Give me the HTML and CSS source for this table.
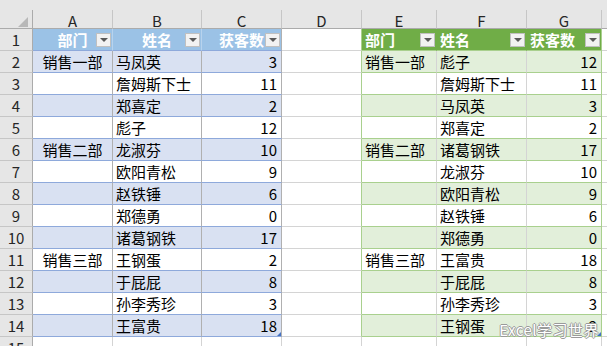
FILE: index.html
```html
<!DOCTYPE html>
<html lang="zh">
<head>
<meta charset="utf-8">
<link rel="stylesheet" href="styles.css">
</head>
<body>
<div class="sheet">
  <div class="strip"></div>
  <div class="row colhdr">
    <div class="hc corner"><svg width="10" height="10" viewBox="0 0 10 10"><polygon points="10,0 10,10 0,10" fill="#b8b8b8"/></svg></div>
    <div class="hc">A</div><div class="hc">B</div><div class="hc">C</div><div class="hc">D</div>
    <div class="hc">E</div><div class="hc">F</div><div class="hc">G</div><div class="hc last"></div>
  </div>

  <div class="row">
    <div class="rh">1</div>
    <div class="cell h1 ctr">部门<span class="dd"></span></div>
    <div class="cell h1 ctr">姓名<span class="dd"></span></div>
    <div class="cell h1 ctr t1r">获客数<span class="dd"></span></div>
    <div class="cell d"></div>
    <div class="cell h2">部门<span class="dd"></span></div>
    <div class="cell h2">姓名<span class="dd"></span></div>
    <div class="cell h2 t2r">获客数<span class="dd"></span></div>
    <div class="cell"></div>
  </div>

  <div class="row">
    <div class="rh">2</div>
    <div class="cell t1 b1 ctr">销售一部</div><div class="cell t1 b1">马凤英</div><div class="cell t1 b1 num t1r">3</div>
    <div class="cell d"></div>
    <div class="cell t2 b2">销售一部</div><div class="cell t2 b2">彪子</div><div class="cell t2 b2 num t2r">12</div>
    <div class="cell"></div>
  </div>
  <div class="row">
    <div class="rh">3</div>
    <div class="cell t1 ctr"></div><div class="cell t1">詹姆斯下士</div><div class="cell t1 num t1r">11</div>
    <div class="cell d"></div>
    <div class="cell t2"></div><div class="cell t2">詹姆斯下士</div><div class="cell t2 num t2r">11</div>
    <div class="cell"></div>
  </div>
  <div class="row">
    <div class="rh">4</div>
    <div class="cell t1 b1 ctr"></div><div class="cell t1 b1">郑喜定</div><div class="cell t1 b1 num t1r">2</div>
    <div class="cell d"></div>
    <div class="cell t2 b2"></div><div class="cell t2 b2">马凤英</div><div class="cell t2 b2 num t2r">3</div>
    <div class="cell"></div>
  </div>
  <div class="row">
    <div class="rh">5</div>
    <div class="cell t1 ctr"></div><div class="cell t1">彪子</div><div class="cell t1 num t1r">12</div>
    <div class="cell d"></div>
    <div class="cell t2"></div><div class="cell t2">郑喜定</div><div class="cell t2 num t2r">2</div>
    <div class="cell"></div>
  </div>
  <div class="row">
    <div class="rh">6</div>
    <div class="cell t1 b1 ctr">销售二部</div><div class="cell t1 b1">龙淑芬</div><div class="cell t1 b1 num t1r">10</div>
    <div class="cell d"></div>
    <div class="cell t2 b2">销售二部</div><div class="cell t2 b2">诸葛钢铁</div><div class="cell t2 b2 num t2r">17</div>
    <div class="cell"></div>
  </div>
  <div class="row">
    <div class="rh">7</div>
    <div class="cell t1 ctr"></div><div class="cell t1">欧阳青松</div><div class="cell t1 num t1r">9</div>
    <div class="cell d"></div>
    <div class="cell t2"></div><div class="cell t2">龙淑芬</div><div class="cell t2 num t2r">10</div>
    <div class="cell"></div>
  </div>
  <div class="row">
    <div class="rh">8</div>
    <div class="cell t1 b1 ctr"></div><div class="cell t1 b1">赵铁锤</div><div class="cell t1 b1 num t1r">6</div>
    <div class="cell d"></div>
    <div class="cell t2 b2"></div><div class="cell t2 b2">欧阳青松</div><div class="cell t2 b2 num t2r">9</div>
    <div class="cell"></div>
  </div>
  <div class="row">
    <div class="rh">9</div>
    <div class="cell t1 ctr"></div><div class="cell t1">郑德勇</div><div class="cell t1 num t1r">0</div>
    <div class="cell d"></div>
    <div class="cell t2"></div><div class="cell t2">赵铁锤</div><div class="cell t2 num t2r">6</div>
    <div class="cell"></div>
  </div>
  <div class="row">
    <div class="rh">10</div>
    <div class="cell t1 b1 ctr"></div><div class="cell t1 b1">诸葛钢铁</div><div class="cell t1 b1 num t1r">17</div>
    <div class="cell d"></div>
    <div class="cell t2 b2"></div><div class="cell t2 b2">郑德勇</div><div class="cell t2 b2 num t2r">0</div>
    <div class="cell"></div>
  </div>
  <div class="row">
    <div class="rh">11</div>
    <div class="cell t1 ctr">销售三部</div><div class="cell t1">王钢蛋</div><div class="cell t1 num t1r">2</div>
    <div class="cell d"></div>
    <div class="cell t2">销售三部</div><div class="cell t2">王富贵</div><div class="cell t2 num t2r">18</div>
    <div class="cell"></div>
  </div>
  <div class="row">
    <div class="rh">12</div>
    <div class="cell t1 b1 ctr"></div><div class="cell t1 b1">于屁屁</div><div class="cell t1 b1 num t1r">8</div>
    <div class="cell d"></div>
    <div class="cell t2 b2"></div><div class="cell t2 b2">于屁屁</div><div class="cell t2 b2 num t2r">8</div>
    <div class="cell"></div>
  </div>
  <div class="row">
    <div class="rh">13</div>
    <div class="cell t1 ctr"></div><div class="cell t1">孙李秀珍</div><div class="cell t1 num t1r">3</div>
    <div class="cell d"></div>
    <div class="cell t2"></div><div class="cell t2">孙李秀珍</div><div class="cell t2 num t2r">3</div>
    <div class="cell"></div>
  </div>
  <div class="row">
    <div class="rh">14</div>
    <div class="cell t1 b1 ctr"></div><div class="cell t1 b1">王富贵</div><div class="cell t1 b1 num t1r grip1">18</div>
    <div class="cell d"></div>
    <div class="cell t2 b2"></div><div class="cell t2 b2">王钢蛋</div><div class="cell t2 b2 num t2r grip2">2</div>
    <div class="cell"></div>
  </div>
  <div class="row">
    <div class="rh">15</div>
    <div class="cell"></div><div class="cell"></div><div class="cell"></div><div class="cell"></div>
    <div class="cell"></div><div class="cell"></div><div class="cell"></div><div class="cell"></div>
  </div>

  <div class="watermark">Excel学习世界</div>
</div>
</body>
</html>
```

FILE: styles.css
```css
html, body {
  margin: 0;
  padding: 0;
  background: #ffffff;
}

body {
  font-family: "Noto Sans CJK SC", "Noto Sans", sans-serif;
  font-size: 15px;
  color: #000000;
}

.sheet {
  position: relative;
  width: 607px;
  height: 346px;
  overflow: hidden;
  background: #ffffff;
}

.strip {
  height: 10px;
  background: #e6e6e6;
}

.row {
  display: grid;
  grid-template-columns: 33px 80px 89px 80px 80px 75px 90px 75px 1fr;
  height: 22px;
}

.row.colhdr {
  height: 19px;
}

.hc {
  box-sizing: border-box;
  background: #e6e6e6;
  border-right: 1px solid #c6c6c6;
  border-bottom: 1px solid #ababab;
  display: flex;
  align-items: center;
  justify-content: center;
  padding-top: 2px;
  color: #262626;
  line-height: 1;
}

.hc.corner {
  border-right-color: #ababab;
  justify-content: flex-end;
  align-items: flex-end;
  padding: 0 4px 1px 0;
}

.hc.last {
  border-right: none;
}

.rh {
  box-sizing: border-box;
  background: #e6e6e6;
  border-right: 1px solid #ababab;
  border-bottom: 1px solid #c6c6c6;
  display: flex;
  align-items: center;
  justify-content: center;
  color: #262626;
  line-height: 1;
}

.cell {
  position: relative;
  box-sizing: border-box;
  border-right: 1px solid #d4d4d4;
  border-bottom: 1px solid #d4d4d4;
  display: flex;
  align-items: center;
  padding: 0 3px;
  white-space: nowrap;
  overflow: hidden;
  line-height: 1;
}

.ctr {
  justify-content: center;
}

.num {
  justify-content: flex-end;
  padding-right: 4px;
}

/* blue table */
.h1 {
  background: #9bc2e6;
  color: #ffffff;
  font-weight: bold;
  border-right-color: #b7d3ee;
  border-bottom-color: #8ea9db;
}

.t1 {
  border-right-color: #b0b0b0;
  border-bottom-color: #8ea9db;
}

.t1r {
  border-right-color: #b0b0b0;
}

.b1 {
  background: #d9e1f2;
}

/* green table */
.h2 {
  background: #70ad47;
  color: #ffffff;
  font-weight: bold;
  border-right-color: #70ad47;
  border-bottom-color: #a9d08e;
}

.t2 {
  border-right-color: #d4d4d4;
  border-bottom-color: #a9d08e;
}

.b2 {
  background: #e2efda;
}

.t2r {
  border-right-color: #a9d08e;
}

.h2.t2r {
  border-right-color: #a9d08e;
}

.d {
  border-right-color: #a9d08e;
}

/* filter dropdown buttons */
.dd {
  position: absolute;
  right: 1px;
  top: 4px;
  width: 15px;
  height: 14px;
  box-sizing: border-box;
  background: #f2f2f2;
  border: 1px solid #c0c0c0;
}

.dd::after {
  content: "";
  position: absolute;
  left: 3px;
  top: 4px;
  border-left: 4px solid transparent;
  border-right: 4px solid transparent;
  border-top: 4px solid #595959;
}

/* table resize grips */
.grip1::after,
.grip2::after {
  content: "";
  position: absolute;
  right: 0;
  bottom: 0;
  border-left: 4px solid transparent;
  border-bottom: 4px solid #4472c4;
}

.watermark {
  position: absolute;
  right: 8px;
  bottom: 9px;
  font-size: 15px;
  line-height: 1;
  color: #ffffff;
  letter-spacing: 0.5px;
  text-shadow: -1px 0 #9a9a9a, 1px 0 #9a9a9a, 0 -1px #9a9a9a, 0 1px #9a9a9a;
}
```
